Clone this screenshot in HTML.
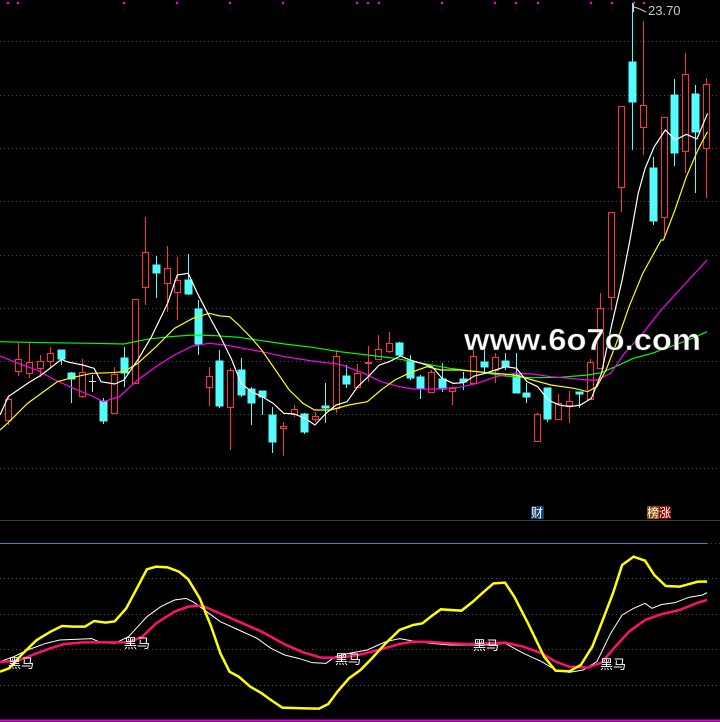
<!DOCTYPE html>
<html><head><meta charset="utf-8"><style>
html,body{margin:0;padding:0;background:#000;}
svg{display:block;}
</style></head><body>
<svg width="720" height="722" viewBox="0 0 720 722" xmlns="http://www.w3.org/2000/svg">
<rect width="720" height="722" fill="#000"/>
<g stroke="#4a4a4a" stroke-width="1" stroke-dasharray="1,3">
<path d="M0 41.5H720M0 95.5H720M0 148.5H720M0 201.5H720M0 255.5H720M0 308.5H720M0 361.5H720M0 414.5H720M0 468.5H720"/>
<path d="M0 578.5H720M0 614.5H720M0 649.5H720M0 685.5H720M707 543.5H720"/>
</g>
<path d="M0 520.5H720" stroke="#3c3c3c"/>
<path d="M0 543.5H707" stroke="#2a8ad8"/>
<path d="M0 720.5H720" stroke="#e000e0" stroke-width="2"/>
<g fill="#ff00ff">
<rect x="7" y="2" width="2" height="2"/><rect x="17" y="2" width="2" height="2"/><rect x="123" y="2" width="2" height="2"/><rect x="176" y="2" width="2" height="2"/><rect x="229" y="2" width="2" height="2"/><rect x="282" y="2" width="2" height="2"/><rect x="356" y="2" width="2" height="2"/><rect x="367" y="2" width="2" height="2"/><rect x="378" y="2" width="2" height="2"/><rect x="441" y="2" width="2" height="2"/><rect x="494" y="2" width="2" height="2"/><rect x="515" y="2" width="2" height="2"/><rect x="537" y="2" width="2" height="2"/><rect x="590" y="2" width="2" height="2"/><rect x="611" y="2" width="2" height="2"/><rect x="633" y="2" width="2" height="2"/><rect x="643" y="2" width="2" height="2"/>
</g>
<!-- cyan candles -->
<g fill="#54fcfc" stroke="#54fcfc" stroke-width="1">
<path d="M61.5 350V365M71.5 372V403M103.5 398V424M124.5 347V387M156.5 256V298M188.5 254V295M198.5 300V355M219.5 350V408M241.5 358V397M251.5 387V425M262.5 391V415M272.5 407V453M304.5 413V434M325.5 383V423M346.5 365V388M399.5 342V357M410.5 355V380M420.5 375V399M442.5 363V392M463.5 372V390M484.5 350V372M505.5 353V370M516.5 353V393M526.5 383V403M547.5 388V422M579.5 392V408M632.5 3V150M653.5 157V225M674.5 79V166M695.5 85V193"/>
<rect x="58" y="350" width="7" height="9"/><rect x="68" y="373" width="7" height="6"/><rect x="100" y="401" width="7" height="20"/><rect x="121" y="358" width="7" height="15"/><rect x="153" y="265" width="7" height="8"/><rect x="185" y="280" width="7" height="14"/><rect x="195" y="309" width="7" height="35"/><rect x="216" y="361" width="7" height="45"/><rect x="238" y="370" width="7" height="25"/><rect x="248" y="389" width="7" height="14"/><rect x="259" y="391" width="7" height="6"/><rect x="269" y="415" width="7" height="27"/><rect x="301" y="414" width="7" height="18"/><rect x="322" y="406" width="7" height="2"/><rect x="343" y="376" width="7" height="8"/><rect x="396" y="343" width="7" height="12"/><rect x="407" y="361" width="7" height="17"/><rect x="417" y="377" width="7" height="11"/><rect x="439" y="379" width="7" height="10"/><rect x="460" y="379" width="7" height="3"/><rect x="481" y="362" width="7" height="5"/><rect x="502" y="361" width="7" height="6"/><rect x="513" y="375" width="7" height="18"/><rect x="523" y="393" width="7" height="4"/><rect x="544" y="388" width="7" height="31"/><rect x="576" y="392" width="7" height="2"/><rect x="629" y="62" width="7" height="40"/><rect x="650" y="168" width="7" height="53"/><rect x="671" y="95" width="7" height="58"/><rect x="692" y="94" width="7" height="38"/>
</g>
<path d="M92.5 375V392M89 381.5H96" stroke="#ddd"/>
<!-- red candles -->
<g stroke="#ff3535" fill="#000" stroke-width="1">
<path d="M8.5 395V425M18.5 343V376M29.5 343V378M40.5 355V377M50.5 347V367M82.5 359V398M114.5 367V414M135.5 299V383M145.5 217V305M167.5 246V312M177.5 257V320M209.5 367V406M230.5 368V450M283.5 422V456M294.5 405V417M315.5 412V422M336.5 350V413M357.5 364V388M368.5 346V382M378.5 335V360M389.5 332V353M431.5 370V393M452.5 387V405M473.5 348V383M495.5 353V383M537.5 413V441M558.5 394V420M569.5 391V423M590.5 359V399M600.5 293V368M611.5 212V310M621.5 106V212M643.5 21V155M664.5 117V235M685.5 53V173M706.5 78V198"/>
<rect x="5.5" y="399.5" width="6" height="21"/><rect x="15.5" y="359.5" width="6" height="12"/><rect x="26.5" y="362.5" width="6" height="11"/><rect x="37.5" y="361.5" width="6" height="7"/><rect x="47.5" y="353.5" width="6" height="8"/><rect x="79.5" y="372.5" width="6" height="24"/><rect x="111.5" y="374.5" width="6" height="39"/><rect x="132.5" y="299.5" width="6" height="84"/><rect x="142.5" y="252.5" width="6" height="35"/><rect x="164.5" y="268.5" width="6" height="15"/><rect x="174.5" y="280.5" width="6" height="12"/><rect x="206.5" y="376.5" width="6" height="11"/><rect x="227.5" y="370.5" width="6" height="37"/><rect x="280.5" y="426.5" width="6" height="2"/><rect x="291.5" y="409.5" width="6" height="5"/><rect x="312.5" y="416.5" width="6" height="3"/><rect x="333.5" y="356.5" width="6" height="52"/><rect x="354.5" y="373.5" width="6" height="14"/><rect x="365.5" y="362.5" width="6" height="1"/><rect x="375.5" y="349.5" width="6" height="10"/><rect x="386.5" y="343.5" width="6" height="8"/><rect x="428.5" y="372.5" width="6" height="20"/><rect x="449.5" y="388.5" width="6" height="3"/><rect x="470.5" y="356.5" width="6" height="27"/><rect x="492.5" y="357.5" width="6" height="13"/><rect x="534.5" y="414.5" width="6" height="27"/><rect x="555.5" y="403.5" width="6" height="16"/><rect x="566.5" y="401.5" width="6" height="4"/><rect x="587.5" y="362.5" width="6" height="37"/><rect x="597.5" y="308.5" width="6" height="60"/><rect x="608.5" y="212.5" width="6" height="85"/><rect x="618.5" y="106.5" width="6" height="81"/><rect x="640.5" y="105.5" width="6" height="22"/><rect x="661.5" y="117.5" width="6" height="100"/><rect x="682.5" y="74.5" width="6" height="77"/><rect x="703.5" y="84.5" width="6" height="64"/>
</g>
<!-- moving averages (zoom coords) -->
<g transform="translate(0,240) scale(0.45914,0.33333)" fill="none" stroke-width="1.2">
<polyline vector-effect="non-scaling-stroke" stroke="#00ff00" points="0,305 100,308 200,310 270,312 320,298 370,290 420,285 470,287 520,292 570,302 620,312 680,322 740,335 800,345 860,355 920,370 980,385 1040,395 1100,408 1160,413 1220,412 1280,405 1310,398 1340,380 1380,355 1420,340 1460,320 1500,300 1540,275"/>
<polyline vector-effect="non-scaling-stroke" stroke="#ff00ff" points="0,348 40,370 80,390 120,420 160,445 200,468 225,485 260,470 300,420 340,380 380,345 420,318 455,310 490,315 530,325 570,335 620,350 680,363 740,373 790,398 830,425 870,440 900,447 950,447 1000,442 1040,430 1080,410 1120,400 1160,402 1200,410 1240,415 1280,420 1300,420 1330,400 1360,340 1400,280 1440,210 1480,150 1520,90 1540,60"/>
<polyline vector-effect="non-scaling-stroke" stroke="#ffff00" points="0,570 20,545 60,490 100,450 125,425 160,412 200,400 240,398 270,395 300,370 340,320 380,265 420,235 455,220 480,228 500,230 520,255 545,290 570,330 600,390 630,450 660,490 685,510 720,510 760,495 800,485 830,450 860,420 890,400 930,380 960,390 1000,390 1040,395 1080,400 1120,405 1160,420 1200,435 1250,445 1280,455 1300,440 1320,390 1345,300 1370,200 1400,100 1440,0 1445,0 1470,-90 1495,-190 1520,-270 1541,-325"/>
<polyline vector-effect="non-scaling-stroke" stroke="#ffffff" points="0,525 18,470 60,430 90,405 134,358 145,365 180,375 205,385 220,425 250,432 270,420 300,360 330,290 365,190 386,105 410,100 430,160 460,240 480,290 505,360 525,430 548,455 571,470 595,490 618,520 641,522 664,535 686,555 710,520 732,495 756,485 779,440 802,410 826,375 848,365 872,348 893,360 917,370 941,380 963,415 987,430 1010,428 1033,408 1057,400 1079,390 1102,380 1125,385 1148,425 1171,440 1194,480 1218,495 1241,500 1264,495 1288,475 1310,400 1333,250 1355,120 1372,0 1390,-140 1405,-215 1425,-280 1449,-330 1471,-300 1495,-317 1518,-303 1541,-380"/>
</g>
<text x="464" y="350" textLength="237" lengthAdjust="spacingAndGlyphs" font-family="Liberation Sans, sans-serif" font-weight="bold" font-size="31" fill="#fff" stroke="#333" stroke-width="0.6">www.6o7o.com</text>
<!-- high marker -->
<path d="M633.5 4V12M634 7L640 9L646 12" stroke="#ccc" fill="none"/>
<text x="648" y="15" font-family="Liberation Sans, sans-serif" font-size="13" fill="#c8c8c8">23.70</text>
<!-- bottom indicator -->
<g transform="translate(0,480) scale(0.45914,0.33333)" fill="none">
<polyline vector-effect="non-scaling-stroke" stroke="#ffffff" stroke-width="1" points="0,545 30,530 60,510 100,490 130,480 200,476 220,488 250,490 280,470 300,440 320,410 350,380 380,360 405,355 420,365 440,385 480,425 520,450 560,475 590,505 620,525 650,535 680,548 710,550 730,530 760,520 800,510 840,485 870,476 900,483 940,490 980,495 1020,495 1060,495 1100,490 1140,520 1180,545 1210,570 1240,577 1270,570 1300,545 1330,460 1355,405 1380,385 1405,370 1420,385 1440,374 1470,368 1500,352 1530,345 1540,338"/>
<polyline vector-effect="non-scaling-stroke" stroke="#ff1070" stroke-width="2.5" points="0,546 40,542 80,520 110,505 140,492 180,487 220,487 280,487 310,470 340,430 380,395 410,380 440,377 470,395 520,425 570,455 620,493 660,517 700,533 740,533 780,525 830,508 870,492 900,485 940,486 980,490 1020,492 1060,490 1100,488 1140,500 1180,520 1210,545 1240,560 1280,563 1310,548 1340,500 1370,455 1405,420 1440,403 1480,390 1520,368 1540,360"/>
<polyline vector-effect="non-scaling-stroke" stroke="#ffff00" stroke-width="2.5" points="0,575 20,565 50,520 80,480 110,455 135,438 160,440 185,440 205,423 230,428 250,424 275,385 300,320 320,268 340,260 365,262 390,275 410,298 435,355 460,440 480,520 500,575 520,590 545,620 570,640 590,660 615,683 665,685 695,686 715,672 735,635 760,595 785,570 810,535 840,490 870,450 900,435 920,430 940,408 960,388 1005,392 1030,365 1050,340 1075,310 1100,308 1120,350 1150,430 1185,530 1210,572 1240,574 1265,555 1290,500 1310,430 1335,340 1355,255 1380,230 1405,242 1425,285 1450,318 1480,320 1520,305 1540,305"/>
</g>
<g font-family="Liberation Sans, 'Noto Sans CJK SC', sans-serif" font-size="13" fill="#fff">
<text x="8" y="668">黑马</text>
<text x="124" y="648">黑马</text>
<text x="335" y="664">黑马</text>
<text x="473" y="650">黑马</text>
<text x="600" y="669">黑马</text>
</g>
<rect x="531" y="506" width="13" height="13" fill="#10427a"/>
<rect x="647" y="506" width="12" height="13" fill="#8a4a00"/>
<rect x="659" y="506" width="12" height="13" fill="#8a0000"/>
<g font-family="Liberation Sans, 'Noto Sans CJK SC', sans-serif" font-size="12" fill="#fff">
<text x="531" y="517">财</text>
<text x="647" y="517">榜涨</text>
</g>
</svg>
</body></html>
